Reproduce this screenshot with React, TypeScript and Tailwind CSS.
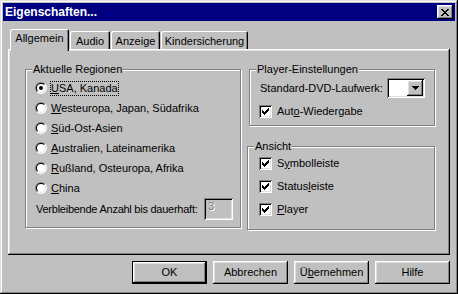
import React from "react";

const RAISED =
  "shadow-[inset_-1px_-1px_0_#000,inset_1px_1px_0_#fff,inset_-2px_-2px_0_#808080,inset_2px_2px_0_#dfdfdf]";
const SUNKEN =
  "shadow-[inset_1px_1px_0_#808080,inset_-1px_-1px_0_#fff,inset_2px_2px_0_#000,inset_-2px_-2px_0_#dfdfdf]";
const GROUP =
  "relative border border-[#808080] shadow-[inset_1px_1px_0_#fff,1px_1px_0_#fff]";
const TAB =
  "relative bg-[#c0c0c0] rounded-t-[2px] flex justify-center shadow-[inset_1px_1px_0_#fff,inset_-1px_0_0_#000,inset_-2px_0_0_#808080]";

function Pixels({ rows, color = "#000" }: { rows: string[]; color?: string }) {
  const w = rows[0].length;
  const h = rows.length;
  return (
    <svg width={w} height={h} viewBox={`0 0 ${w} ${h}`} shapeRendering="crispEdges">
      {rows.flatMap((r, y) =>
        r.split("").map((c, x) =>
          c === "x" ? <rect key={`${x}-${y}`} x={x} y={y} width={1} height={1} fill={color} /> : null
        )
      )}
    </svg>
  );
}

const CHECK = ["......x", ".....xx", "x...xxx", "xx.xxx.", "xxxxx..", ".xxx...", "..x...."];
const CLOSE = ["xx....xx", ".xx..xx.", "..xxxx..", "...xx...", "..xxxx..", ".xx..xx.", "xx....xx"];
const ARROW = ["xxxxxxx", ".xxxxx.", "..xxx..", "...x..."];

function Radio({ checked }: { checked?: boolean }) {
  return (
    <svg width="12" height="12" viewBox="0 0 12 12" className="shrink-0">
      <path d="M10.243 1.757A6 6 0 0 0 1.757 10.243Z" fill="#808080" />
      <path d="M10.243 1.757A6 6 0 0 1 1.757 10.243Z" fill="#fff" />
      <path d="M9.536 2.464A5 5 0 0 0 2.464 9.536Z" fill="#000" />
      <path d="M9.536 2.464A5 5 0 0 1 2.464 9.536Z" fill="#dfdfdf" />
      <circle cx="6" cy="6" r="4" fill="#fff" />
      {checked && <circle cx="6" cy="6" r="2" fill="#000" />}
    </svg>
  );
}

function Checkbox() {
  return (
    <div className={`w-[13px] h-[13px] shrink-0 bg-white flex items-center justify-center ${SUNKEN}`}>
      <Pixels rows={CHECK} />
    </div>
  );
}

function RadioRow({ children, checked }: { children: React.ReactNode; checked?: boolean }) {
  return (
    <div className="h-[20px] flex items-center">
      <Radio checked={checked} />
      <span
        className={`ml-[3px] border leading-[13px] whitespace-nowrap ${checked ? "border-dotted border-black" : "border-transparent"}`}
      >
        {children}
      </span>
    </div>
  );
}

function CheckRow({ children, className = "" }: { children: React.ReactNode; className?: string }) {
  return (
    <div className={`flex items-center ${className}`}>
      <Checkbox />
      <span className="ml-[5px] whitespace-nowrap">{children}</span>
    </div>
  );
}

function Button({ children, def }: { children: React.ReactNode; def?: boolean }) {
  return (
    <div
      className={`w-[75px] h-[23px] bg-[#c0c0c0] flex items-center justify-center ${
        def
          ? "shadow-[inset_0_0_0_1px_#000,inset_-2px_-2px_0_#000,inset_2px_2px_0_#fff,inset_-3px_-3px_0_#808080,inset_3px_3px_0_#dfdfdf]"
          : RAISED
      }`}
    >
      {children}
    </div>
  );
}

export default function App() {
  return (
    <div
      className="w-[458px] h-[294px] bg-[#c0c0c0] p-[3px] flex flex-col text-[11px] leading-[13px] text-black font-['Liberation_Sans',Arial,sans-serif] shadow-[inset_-1px_-1px_0_#000,inset_1px_1px_0_#dfdfdf,inset_-2px_-2px_0_#808080,inset_2px_2px_0_#fff]"
    >
      {/* Title bar */}
      <div className="h-[18px] bg-[#000080] flex items-center px-[2px] shrink-0">
        <span className="text-white font-bold text-[12px] leading-[14px]">Eigenschaften...</span>
        <div className={`ml-auto w-[16px] h-[14px] bg-[#c0c0c0] flex items-center justify-center ${RAISED}`}>
          <Pixels rows={CLOSE} />
        </div>
      </div>

      {/* Tabs + panel */}
      <div className="px-[5px] mt-[8px]">
        <div className="flex items-end h-[20px] pl-[2px]">
          <div className={`${TAB} z-10 w-[59px] h-[22px] mb-[-2px] pt-[3px]`}>Allgemein</div>
          <div className={`${TAB} ml-[1px] w-[40px] h-[18px] pt-[4px]`}>Audio</div>
          <div className={`${TAB} ml-[1px] w-[49px] h-[18px] pt-[4px]`}>Anzeige</div>
          <div className={`${TAB} ml-[1px] w-[87px] h-[18px] pt-[4px]`}>Kindersicherung</div>
        </div>
        <div className={`h-[206px] bg-[#c0c0c0] pt-[20px] pl-[17px] flex gap-[8px] ${RAISED}`}>
          {/* Aktuelle Regionen */}
          <div className={`${GROUP} w-[216px] h-[159px]`}>
            <span className="absolute left-[6px] top-[-7px] px-[1px] bg-[#c0c0c0]">Aktuelle Regionen</span>
            <div className="pt-[8px] pl-[9px] flex flex-col">
              <RadioRow checked>
                <u>U</u>SA, Kanada
              </RadioRow>
              <RadioRow>
                <u>W</u>esteuropa, Japan, Südafrika
              </RadioRow>
              <RadioRow>
                <u>S</u>üd-Ost-Asien
              </RadioRow>
              <RadioRow>
                <u>A</u>ustralien, Lateinamerika
              </RadioRow>
              <RadioRow>
                <u>R</u>ußland, Osteuropa, Afrika
              </RadioRow>
              <RadioRow>
                <u>C</u>hina
              </RadioRow>
              <div className="h-[22px] flex items-center pl-[1px]">
                <span className="w-[168px] shrink-0 whitespace-nowrap tracking-[-0.25px]">
                  Verbleibende Anzahl bis dauerhaft:
                </span>
                <div
                  className={`w-[29px] h-[22px] shrink-0 bg-[#c0c0c0] pl-[4px] pt-[2px] text-[#808080] [text-shadow:1px_1px_0_#fff] ${SUNKEN}`}
                >
                  3
                </div>
              </div>
            </div>
          </div>

          {/* Right column */}
          <div className="flex flex-col">
            <div className={`${GROUP} w-[186px] h-[57px]`}>
              <span className="absolute left-[6px] top-[-7px] px-[1px] bg-[#c0c0c0]">Player-Einstellungen</span>
              <div className="pt-[8px] pl-[10px]">
                <div className="h-[20px] flex items-center">
                  <span className="w-[127px] shrink-0 whitespace-nowrap">Standard-DVD-Laufwerk:</span>
                  <div className={`w-[38px] h-[20px] bg-white p-[2px] flex justify-end ${SUNKEN}`}>
                    <div className={`w-[16px] h-[16px] bg-[#c0c0c0] flex items-center justify-center ${RAISED}`}>
                      <Pixels rows={ARROW} />
                    </div>
                  </div>
                </div>
                <CheckRow className="mt-[7px] h-[13px] ml-[-1px]">
                  Aut<u>o</u>-Wiedergabe
                </CheckRow>
              </div>
            </div>

            <div className={`${GROUP} mt-[20px] ml-[-2px] w-[188px] h-[84px]`}>
              <span className="absolute left-[6px] top-[-7px] px-[1px] bg-[#c0c0c0]">Ansicht</span>
              <div className="pt-[5px] pl-[11px] flex flex-col">
                <CheckRow className="h-[23px]">
                  S<u>y</u>mbolleiste
                </CheckRow>
                <CheckRow className="h-[23px]">
                  Status<u>l</u>eiste
                </CheckRow>
                <CheckRow className="h-[23px]">
                  <u>P</u>layer
                </CheckRow>
              </div>
            </div>
          </div>
        </div>
      </div>

      {/* Buttons */}
      <div className="mt-[6px] px-[5px] flex justify-end gap-[6px]">
        <Button def>OK</Button>
        <Button>Abbrechen</Button>
        <Button>
          Ü<u>b</u>ernehmen
        </Button>
        <Button>Hilfe</Button>
      </div>
    </div>
  );
}
